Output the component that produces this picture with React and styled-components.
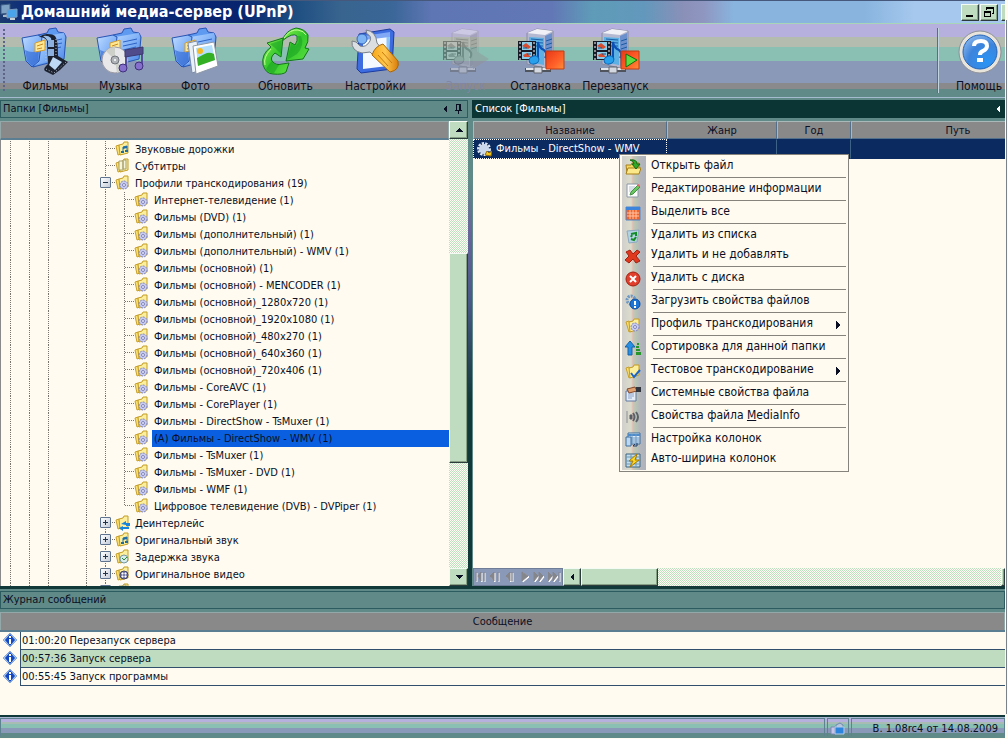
import React from "react";
import styled, { createGlobalStyle, css } from "styled-components";

const Global = createGlobalStyle`
  *, *::before, *::after { box-sizing: border-box; }
  body {
    margin: 0;
    background: #fffbf0;
    color: #0a0f24;
    font-family: Tahoma, "DejaVu Sans Condensed", "Noto Sans", sans-serif;
    font-size: 11px;
    line-height: 16px;
  }
  button {
    font: inherit;
    color: inherit;
    border: 0;
    padding: 0;
    margin: 0;
    background: none;
  }
  ul { list-style: none; margin: 0; padding: 0; }
  h1, h2 { margin: 0; font-weight: normal; font-size: inherit; }
  svg { display: block; flex: none; }
`;

const TEAL = "#5f8a87";
const GREEN = "#c0dcc0";
const CREAM = "#fffbf0";
const INK = "#0b3434";

const raised = css`
  background: ${GREEN};
  border: 1px solid;
  border-color: #f4fbf4 #2c3c3c #2c3c3c #f4fbf4;
  box-shadow: inset -1px -1px 0 #86a086;
`;

const dither = css`
  background:
    linear-gradient(${GREEN}, ${GREEN}) 0 0 / 0 0,
    repeating-conic-gradient(#bfe0bf 0 25%, #fffdf6 0 50%) 0 0 / 2px 2px;
`;

/* ---------- window frame ---------- */

const Window = styled.div`
  display: flex;
  flex-direction: column;
  height: 100vh;
  padding: 0 3px 1px 0;
  background: linear-gradient(#7a8288, #7a8288) right 1px top 20px / 1px calc(100% - 45px) no-repeat ${CREAM};
`;

const Frame = styled.div`
  display: flex;
  flex-direction: column;
  flex: 1;
  min-height: 0;
  overflow: hidden;
  background: ${TEAL};
`;

const TitleBar = styled.header`
  display: flex;
  align-items: center;
  flex: none;
  height: 23px;
  overflow: hidden;
  border-top: 1px solid #46587c;
  background: linear-gradient(90deg,
    #1c3b70 0, #0a2a7e 3%, #08246e 24%, #1c4c80 29%, #38648f 34%, #3a6698 39%,
    #5f76b4 43%, #6278b6 55%, #5f9cb8 59%, #6298bc 64%, #8a90b8 68%, #8f96c0 70%,
    #88b4de 73%, #88b4de 86%, #a6c8ee 91%, #a6c8ee 100%);
`;

const Title = styled.h1`
  flex: 1;
  padding-left: 3px;
  color: #fff;
  font-size: 16px;
  line-height: 22px;
  font-weight: bold;
  white-space: nowrap;
`;

const WindowButtons = styled.div`
  display: flex;
  gap: 1px;
  margin-right: -14px;
`;

const WindowButton = styled.button`
  ${raised}
  display: grid;
  place-items: center;
  width: 18px;
  height: 17px;
  margin-left: ${(p) => (p.$apart ? 2 : 0)}px;
`;

/* ---------- toolbar ---------- */

const Toolbar = styled.nav`
  display: flex;
  flex: none;
  height: 77px;
  overflow: hidden;
  border-top: 1px solid #a8d4b8;
  border-bottom: 2px solid ${TEAL};
  background: linear-gradient(#b5b0de 0 13px, #b4bcb0 13px 23px, #8abfb4 23px 37px,
    #8b99b8 37px 59px, #8a8a8c 59px 65px, ${TEAL} 65px 73px, #a5bcd0 73px);
`;

const Grip = styled.div`
  width: 2px;
  margin: 5px 3px 5px 3px;
  background: repeating-linear-gradient(#5d6488 0 2px, transparent 2px 4px);
`;

const ToolGroup = styled.div`
  display: flex;
  margin-right: 15px;
`;

const ToolButton = styled.button`
  display: flex;
  flex-direction: column;
  align-items: center;
  width: ${(p) => (p.$narrow ? 52 : 75)}px;
  padding-top: 3px;
  font-size: 12px;
  line-height: 18px;
  white-space: nowrap;
  &:disabled { color: #8186a4; }
  &:disabled svg { opacity: 0.4; filter: grayscale(1); }
`;

const ToolDivider = styled.div`
  width: 2px;
  margin: 4px 14px 5px auto;
  border-left: 1px solid #5c6a90;
  border-right: 1px solid #c2d4de;
`;

/* ---------- docked panels ---------- */

const Split = styled.main`
  display: flex;
  flex: 1;
  min-height: 0;
  border-bottom: 3px solid #12393a;
`;

const Panel = styled.section`
  display: flex;
  flex-direction: column;
  position: relative;
  min-width: 0;
  flex: ${(p) => p.$flex};
`;

const PanelHeader = styled.div`
  display: flex;
  align-items: center;
  gap: 8px;
  flex: none;
  height: 18px;
  padding: 0 4px 0 2px;
  border: 1px solid ${(p) => (p.$active ? INK : "#2c5c60")};
  background: ${(p) => (p.$active ? INK : TEAL)};
  color: ${(p) => (p.$active ? "#fff" : "inherit")};
`;

const PanelTitle = styled.h2`
  flex: 1;
`;

const TinyButton = styled.button`
  display: grid;
  place-items: center;
  color: inherit;
`;

const Splitter = styled.div`
  width: 4px;
  background: linear-gradient(${TEAL} 80px, #68669a 130px, #4a5a88 200px, #12393a 300px);
`;

const HeaderBand = styled.div`
  flex: none;
  height: 19px;
  border: 1px solid #93a8a8;
  border-bottom: 2px solid #5c7e92;
  background: #8a898a;
`;

const Columns = styled.div`
  display: flex;
  flex: 1;
  min-height: 0;
  padding: 3px 0 0 ${(p) => (p.$inset ? 1 : 0)}px;
`;

const Column = styled.div`
  display: flex;
  flex-direction: column;
  flex: 1;
  min-width: 0;
`;

const TreeBody = styled.ul`
  flex: 1;
  overflow: hidden;
  background: ${CREAM};
  border-left: 1px solid #8a8a8a;
  padding-top: 1px;
`;

const VScroll = styled.div`
  display: flex;
  flex-direction: column;
  width: 19px;
  ${dither}
`;

const HScroll = styled.div`
  display: flex;
  flex: 1;
  overflow: hidden;
  ${dither}
`;

const ScrollButton = styled.button`
  ${raised}
  display: grid;
  place-items: center;
  flex: none;
  width: ${(p) => p.$w || 18}px;
  height: 18px;
`;

const VThumb = styled.div`
  ${raised}
  flex: 0 0 45%;
`;

const HThumb = styled.div`
  ${raised}
  flex: 0 0 77px;
`;

const Spring = styled.div`
  flex: ${(p) => p.$grow || 1};
`;

/* ---------- tree ---------- */

const TreeRow = styled.li`
  display: flex;
  height: 17px;
`;

const dotsV = "repeating-linear-gradient(#77756e 0 1px, transparent 1px 2px)";
const dotsH = "repeating-linear-gradient(90deg, #77756e 0 1px, transparent 1px 2px)";

const Guide = styled.div`
  display: grid;
  place-items: center;
  flex: none;
  width: 19px;
  background-repeat: no-repeat;
  background-image: ${(p) =>
    p.$kind === "none" ? "none" : p.$kind === "line" ? dotsV : `${dotsV}, ${dotsH}`};
  background-position: 9px 0, 10px 7px;
  background-size: 1px ${(p) => (p.$kind === "last" ? "8px" : "100%")}, 9px 1px;
`;

const Expander = styled.button`
  display: grid;
  place-items: center;
  width: 11px;
  height: 11px;
  margin-bottom: 2px;
  border: 1px solid #5d7390;
  border-radius: 1px;
  background: linear-gradient(135deg, #fff, #c4ccd8);
`;

const NodeLabel = styled.span`
  flex: 1;
  margin-left: 3px;
  padding-left: 2px;
  line-height: 17px;
  white-space: nowrap;
  background: ${(p) => (p.$selected ? "#0a5fe0" : "transparent")};
`;

/* ---------- file list ---------- */

const TableArea = styled.div`
  flex: 1;
  min-height: 0;
  overflow: hidden;
  background: ${CREAM};
`;

const FileTable = styled.table`
  width: 592px;
  table-layout: fixed;
  border-collapse: separate;
  border-spacing: 0;
`;

const FileHead = styled.th`
  width: ${(p) => p.$w}px;
  height: 18px;
  padding: 1px 0 0;
  line-height: 15px;
  font-weight: normal;
  text-align: center;
  background: #8a898a;
  border: 1px solid;
  border-color: #a9b9b9 #52708c #52708c #a9b9b9;
`;

const FileCell = styled.td`
  height: 20px;
  padding: 0 0 0 3px;
  line-height: 18px;
  color: #fff;
  white-space: nowrap;
  background: #0a2a60;
  border: 1px ${(p) => (p.$focus ? "dotted #fff" : "solid #0a2a60")};
  border-right: 1px ${(p) => (p.$focus ? "dotted #fff" : "solid #3c6288")};
`;

const FileName = styled.span`
  display: flex;
  align-items: center;
  gap: 4px;
`;

const ListFooter = styled.div`
  display: flex;
  flex: none;
  height: 18px;
`;

const Navigator = styled.div`
  display: flex;
  align-items: center;
  justify-content: space-around;
  width: 90px;
  border: 1px solid #6f7d98;
  background: #8b99b8;
`;

const NavButton = styled.button`
  &:disabled { color: #85858c; }
`;

/* ---------- context menu ---------- */

const Menu = styled.div`
  position: absolute;
  left: 147px;
  top: 54px;
  width: 230px;
  padding: 0 2px 3px 2px;
  border: 1px solid #85837c;
  background: linear-gradient(90deg, #d0cfcc, #dcdccb 9px, #dcbcb4 11px, #b8c8b4 13px, #b4b6bc 18px, #aeb2ba) 2px 1px / 24px calc(100% - 2px) no-repeat ${CREAM};
`;

const MenuItem = styled.button`
  display: flex;
  align-items: center;
  width: 100%;
  height: 20px;
  font-size: 12px;
  line-height: 20px;
  text-align: left;
  white-space: nowrap;
`;

const MenuIcon = styled.span`
  flex: none;
  width: 29px;
  padding: 4px 0 0 3px;
`;

const MenuText = styled.span`
  flex: 1;
`;

const Submenu = styled.span`
  padding: 3px 6px 0 0;
`;

const MenuLine = styled.div`
  height: 3px;
  margin-left: 31px;
  border-bottom: 1px solid #85837c;
`;

/* ---------- log and status ---------- */

const LogPanel = styled.section`
  display: flex;
  flex-direction: column;
  flex: none;
  min-height: 128px;
  padding-top: 2px;
`;

const LogTable = styled.table`
  width: 100%;
  border-collapse: collapse;
  background: ${CREAM};
`;

const LogHead = styled.th`
  height: 18px;
  padding: 0;
  line-height: 15px;
  font-weight: normal;
  text-align: center;
  background: #8a898a;
  border: 1px solid #93a8a8;
  border-bottom: 2px solid #5c7e92;
`;

const LogIconCell = styled.td`
  width: 20px;
  height: 18px;
  padding: 0 0 0 1px;
`;

const LogCell = styled.td`
  height: 18px;
  padding: 1px 1px 0;
  background: ${(p) => (p.$alt ? GREEN : CREAM)};
  border-left: 1px solid #32506e;
  border-bottom: 1px solid #32506e;
`;

const LogArea = styled.div`
  flex: 1;
  margin-top: 3px;
  background: ${CREAM};
  border-bottom: 2px solid #12393a;
`;

const StatusBar = styled.footer`
  display: flex;
  gap: 2px;
  flex: none;
  height: 21px;
  padding: 1px 0 2px;
  background: linear-gradient(#a9b8d0 0 1px, #b5b0de 1px 5px, #a9bcb4 5px 7px, #8abfb4 7px 11px,
    #8b99b8 11px 16px, ${TEAL} 16px);
`;

const StatusCell = styled.div`
  display: flex;
  align-items: center;
  justify-content: flex-end;
  flex: ${(p) => p.$flex};
  padding-right: ${(p) => (p.$text ? 6 : 2)}px;
  padding-top: 2px;
  border: 1px solid #5f8290;
  border-bottom: 0;
`;

/* ---------- drawings ---------- */

const FolderBase = () => (
  <>
    <path d="M16 7l9-2 2-4 7-1 2 4 6 1 2 4-2 22-31 8z" fill="#5e9af0" stroke="#2854b4" strokeLinejoin="round" />
    <path d="M18 9l24-4 1 4-2 21-28 7z" fill="url(#folder)" />
    <path d="M26 14l14-3M26 18l14-3M26 22l13-3" stroke="#2c62c4" />
    <path d="M0 10l16-3 4 2-3 24-7 6-6-6z" fill="url(#folder)" stroke="#2854b4" strokeLinejoin="round" />
    <path d="M3 22q8 4 14 0l-1 11-6 5-5-5z" fill="#2c64d0" opacity="0.6" />
    <path d="M13 15l10-3v10l-10 2z" fill="#ffe894" stroke="#d49c2c" />
    <path d="M15 18l6-2M15 21l5-1" stroke="#c88820" />
  </>
);

const Defs = () => (
  <defs>
    <linearGradient id="folder" x1="0" y1="0" x2="1" y2="1">
      <stop offset="0" stopColor="#c0dcff" />
      <stop offset="0.5" stopColor="#84b4f8" />
      <stop offset="1" stopColor="#4a84e4" />
    </linearGradient>
    <linearGradient id="leaf" x1="0" y1="0" x2="1" y2="1">
      <stop offset="0" stopColor="#8cf050" />
      <stop offset="0.5" stopColor="#34c82c" />
      <stop offset="1" stopColor="#5ce040" />
    </linearGradient>
    <linearGradient id="handle" x1="0" y1="0" x2="1" y2="0">
      <stop offset="0" stopColor="#f6a818" />
      <stop offset="0.5" stopColor="#ffc850" />
      <stop offset="1" stopColor="#d87c08" />
    </linearGradient>
    <linearGradient id="stop" x1="0" y1="0" x2="1" y2="1">
      <stop offset="0" stopColor="#e83818" />
      <stop offset="0.6" stopColor="#ff6028" />
      <stop offset="1" stopColor="#ff9038" />
    </linearGradient>
    <radialGradient id="help" cx="0.7" cy="0.8" r="0.9">
      <stop offset="0" stopColor="#2a94f4" />
      <stop offset="0.6" stopColor="#3c84dc" />
      <stop offset="1" stopColor="#8cb8ec" />
    </radialGradient>
  </defs>
);

const toolIcon = (children) => (
  <svg width="50" height="50" viewBox="-1 -1 50 50" fill="none" aria-hidden="true">
    <Defs />
    {children}
  </svg>
);

const FilmIcon = () => toolIcon(
  <>
    <FolderBase />
    <path d="M17 9q4-3 8-3 6 0 8 2 3 3 3 20l10 6-8 8-7 5-8-4q-2-2 1-5l2-2-1-23q-2-4-8-4z" fill="#1c2230" />
    <path d="M21 8q5-1 8 2l1 7-3 1q0-6-6-10z" fill="#9cc0ec" />
    <path d="M26 12h6v7h-6zM26 21h6v7h-6z" fill="#8cb0e0" />
    <path d="M27 37l4-8 9 5-7 8z" fill="#bcd8f4" />
    <path d="M24 14v20M34 11v17" stroke="#b8c4d4" strokeDasharray="1 2" />
    <path d="M24 41l8 4 12-11" stroke="#b8c4d4" strokeDasharray="1 2" />
  </>
);

const MusicIcon = () => toolIcon(
  <>
    <FolderBase />
    <circle cx="18" cy="32" r="13" fill="#e8e8ea" stroke="#9a9aa4" />
    <path d="M18 32l-9-9a13 13 0 0 1 9-4zM18 32l9 8a13 13 0 0 1-7 5z" fill="#ccd0c8" />
    <circle cx="18" cy="32" r="4" fill="#b0b4b8" stroke="#70747c" />
    <circle cx="18" cy="32" r="1" fill="#fff" />
    <path d="M29 39V24M45 36V20" stroke="#5450a0" strokeWidth="2" />
    <path d="M28 22l18-3v7l-18 3z" fill="#504c8c" stroke="#3c3870" />
    <ellipse cx="26" cy="40" rx="4" ry="4" fill="#8470cc" stroke="#40307c" />
    <ellipse cx="42" cy="38" rx="4" ry="4" fill="#8470cc" stroke="#40307c" />
  </>
);

const PhotoIcon = () => toolIcon(
  <>
    <FolderBase />
    <path d="M16 15l9-2 4 29-9 3z" fill="#e8f0f8" stroke="#7c8ca8" />
    <path d="M21 18l21-4 4 24-22 8z" fill="#fff" stroke="#8c98a8" />
    <path d="M24 20l16-3 3 15-17 5z" fill="#b4e0fc" />
    <path d="M25 30q7-4 10-5t7 1l1 6-17 6z" fill="#34b024" />
    <circle cx="28" cy="23" r="3" fill="#f8b820" />
  </>
);

const RefreshIcon = () => toolIcon(
  <>
    <path d="M20 13Q24 2 34 0q9 1 12 7 1 7-3 13l4 1-6 10-17 2 4-19 5 3q3-4 2-9-4-4-15 5z" fill="url(#leaf)" stroke="#14781c" strokeLinejoin="round" />
    <path d="M35 8q4 6-2 10l-4-3-4 17 10-6q8-9 4-18z" fill="#1ca424" opacity="0.6" />
    <path d="M22 10q6-9 14-8 6 1 8 5" stroke="#c4ff98" />
    <path d="M21 10L5 15l4 4q-10 7-8 18 3 9 10 9 10 1 13-2l3-9-7 1q-6 2-10-3-2-4 3-8l6 4z" fill="url(#leaf)" stroke="#14781c" strokeLinejoin="round" />
    <path d="M20 12L8 16l5 4 6 6zM10 33q-4 4-6 8 4 5 8 4l5-8q-5 0-7-4z" fill="#1ca424" opacity="0.6" />
    <path d="M9 21Q1 29 3 37" stroke="#c4ff98" />
  </>
);

const SettingsIcon = () => toolIcon(
  <>
    <path d="M7 6l31-5 4 3-2 37-31 4-4-4z" fill="#3c6ce0" stroke="#1c3ca0" />
    <path d="M11 9l27-4-2 33-25 3z" fill="#f4f8ff" />
    <path d="M12 8l26-4v5l-26 3z" fill="#80a8f4" />
    <path d="M36 9v26" stroke="#8cc4f8" strokeWidth="3" />
    <path d="M0 13q-1 10 10 12l8-1 5 5 7-8-5-6Q24 3 14 2l1 4q5 2 3 7-4 7-10 5l-4-4z" fill="#dcdfe2" stroke="#788088" />
    <circle cx="10" cy="11" r="5" fill="#7cb4f4" stroke="#3868b8" />
    <path d="M20 27q3-9 11-11l15 17q2 9-8 11z" fill="url(#handle)" stroke="#a86808" />
    <path d="M26 27l10 11M30 24l10 11" stroke="#c87c10" />
  </>
);

const ServerBase = () => (
  <>
    <path d="M10 5l10-4 16 2v33l-8 4-18-4z" fill="#b4b8d0" stroke="#888ca0" />
    <path d="M10 5l10-4 16 2-8 4z" fill="#f0f0f6" />
    <path d="M12 9l15 1v27l-15-3z" fill="#5cb0e4" />
    <path d="M28 8l7-3v30l-7 4z" fill="#6c90cc" />
    <path d="M14 11l12 1M14 14l12 1M14 18h12M29 13l6-2M29 17l6-2M29 21l6-2" stroke="#1c5ca4" />
    <path d="M1 13h18v19H1z" fill="#181c28" />
    <path d="M5 14h10v8H5zM5 24h10v7H5z" fill="#8ccce8" />
    <path d="M5 18l4-3 5 4-3 2zM6 27l4-2 4 4H7z" fill="#d84c30" />
    <path d="M6 20h4M10 26h4" stroke="#184c80" />
    <path d="M3 14v18M17 14v18" stroke="#fff" strokeDasharray="2 2" />
    <path d="M21 32V14q1 6 6 8 4 4 1 8" stroke="#0c50b4" strokeWidth="2" />
    <ellipse cx="17" cy="32" rx="5" ry="4" fill="#28a0ec" stroke="#0c64b4" transform="rotate(-20 17 32)" />
    <path d="M8 42h26" stroke="#50545c" strokeWidth="4" />
    <path d="M9 41h24" stroke="#e4e8ec" strokeWidth="2" />
    <path d="M17 39h8v6h-8z" fill="#d4d8e0" stroke="#60646c" />
  </>
);

const StartIcon = () => toolIcon(
  <>
    <ServerBase />
    <path d="M31 21l16 10-16 10z" fill="#8c8eb0" />
  </>
);

const StopIcon = () => toolIcon(
  <>
    <ServerBase />
    <path d="M29 23h18v18H29z" fill="url(#stop)" stroke="#c03c14" />
  </>
);

const RestartIcon = () => toolIcon(
  <>
    <ServerBase />
    <path d="M29 23h18v18H29z" fill="url(#stop)" stroke="#c03c14" />
    <path d="M34 26l11 6-11 7z" fill="#60dc40" stroke="#146c10" />
  </>
);

const HelpIcon = () => toolIcon(
  <>
    <circle cx="25" cy="24" r="21" fill="#e8e4dc" stroke="#8c9098" />
    <circle cx="25" cy="24" r="17" fill="url(#help)" stroke="#2464b8" />
    <path d="M19 18q0-5 7-5 6 0 6 5 0 3-4 5-3 1-3 4" stroke="#fff" strokeWidth="4" />
    <path d="M22 30h6v4h-6z" fill="#fff" />
  </>
);

const AppIcon = ({ size = 18 }) => (
  <svg width={size} height={size} viewBox="0 0 18 18" aria-hidden="true">
    <path d="M1 2l9-1v9l-9 1z" fill="#7ea2c4" stroke="#3c5c84" />
    <path d="M3 12l6-1v3H3z" fill="#a8b8c4" />
    <path d="M7 7l10-1v8l-10 1z" fill="#4aa4ec" stroke="#7c9cbc" />
    <path d="M10 15h5v2h-5z" fill="#c4d0d8" />
  </svg>
);

const StatusIcon = () => (
  <svg width="16" height="14" viewBox="0 0 16 14" aria-hidden="true">
    <path d="M1 5h4v7H1z" fill="#c8c4e8" stroke="#7c88b4" />
    <path d="M6 3l4-2 3 2v3H6z" fill="#b8c4dc" stroke="#6c8cac" />
    <path d="M5 5h9v7H5z" fill="#2c84dc" stroke="#b4cce8" />
  </svg>
);

const gear = (cx, cy, color, stroke) => (
  <>
    <circle cx={cx} cy={cy} r="4" fill={color} />
    <circle cx={cx} cy={cy} r="4" fill="none" stroke={stroke} strokeDasharray="2 1" />
    <circle cx={cx} cy={cy} r="1.5" fill="#eef" stroke={stroke} />
  </>
);

const overlays = {
  gear: gear(9, 10, "#c8ccf0", "#8084b8"),
  music: <><path d="M8 11V6l4-1v5" fill="none" stroke="#1c6ca8" strokeWidth="1" /><path d="M8 6l4-1v2l-4 1zM6 10h3v2H6zM10 9h3v2h-3z" fill="#1c6ca8" /></>,
  text: <path d="M4 3h4v9H4zM8 2h3v9H8z" fill="#f4f4dc" stroke="#a8a068" />,
  swap: <path d="M6 9l5-3v2h4v3h-4v-1zM14 12H8v-1l-4 2 4 3v-2h6z" fill="#1484dc" />,
  clock: <><circle cx="9" cy="10" r="4" fill="#d8ecec" stroke="#7898a0" /><path d="M7 9l2 2 3-3" fill="none" stroke="#288838" /></>,
  reel: <><circle cx="9" cy="9" r="4" fill="#7c80ac" stroke="#40446c" /><path d="M7 7h1v1H7zM10 7h1v1h-1zM7 10h1v1H7zM10 10h1v1h-1z" fill="#fff" stroke="#fff" /></>,
};

const FolderIcon = ({ kind }) => (
  <svg width="15" height="16" viewBox="0 0 15 16" aria-hidden="true">
    <path d="M1 5l3-1 2 9-3 1z" fill="#f8e070" stroke="#c8a02c" />
    <path d="M4 4l4-1 1-2h4v11l-8 2z" fill="#fbee9c" stroke="#c49c24" />
    {overlays[kind]}
  </svg>
);

const FileGear = () => (
  <svg width="15" height="15" viewBox="0 0 15 15" aria-hidden="true">
    <circle cx="7" cy="7" r="5" fill="none" stroke="#dce4f0" strokeWidth="4" strokeDasharray="2 1" />
    <circle cx="7" cy="7" r="5" fill="#ccd8ec" />
    <path d="M8 13l2-4 2 2 3-2-1 5z" fill="#f4c81c" stroke="#986c08" />
  </svg>
);

const InfoIcon = () => (
  <svg width="16" height="16" viewBox="0 0 16 16" aria-hidden="true">
    <path d="M8 1l7 7-7 7-7-7z" fill="#a8c4ec" stroke="#8cacd8" strokeLinejoin="round" />
    <path d="M8 2l5 6-5 6-5-6z" fill="#1448c0" />
    <path d="M8 4v2M8 7v5" stroke="#fff" strokeWidth="2" />
  </svg>
);

const Arrow = ({ dir, size = 4 }) => {
  const paths = {
    left: `M${size} 0v${size * 2}L0 ${size}z`,
    right: `M0 0v${size * 2}L${size} ${size}z`,
    up: `M0 ${size}h${size * 2}L${size} 0z`,
    down: `M0 0h${size * 2}L${size} ${size}z`,
  };
  const wide = dir === "up" || dir === "down";
  return (
    <svg width={wide ? size * 2 : size} height={wide ? size : size * 2} shapeRendering="crispEdges" aria-hidden="true">
      <path d={paths[dir]} fill="currentColor" />
    </svg>
  );
};

const Pin = () => (
  <svg width="8" height="10" viewBox="0 0 8 10" shapeRendering="crispEdges" aria-hidden="true">
    <path d="M1 0h5v1H1zM1 0h1v6H1zM4 0h2v6H4zM0 6h7v1H0zM3 7h1v3H3z" fill="currentColor" />
  </svg>
);

const navShapes = [
  "M1 1v9M6 1L3 5l3 5zM9 1v9",
  "M5 1L1 5l4 5zM9 1v9",
  "M6 1L2 5l4 5zM8 1v9",
  "M3 1l6 4-6 5z",
  "M1 1l4 4-4 5zM6 1l4 4-4 5z",
  "M0 1l4 4-4 5zM5 1l4 4-4 5zM11 1v9",
];

const NavGlyph = ({ d }) => (
  <svg width="13" height="12" viewBox="0 0 13 12" aria-hidden="true">
    <path d={d} fill="#fff" stroke="#fff" transform="translate(1 1)" />
    <path d={d} fill="#85858c" stroke="#85858c" />
  </svg>
);

const menuFolder = (
  <>
    <path d="M1 5l3-1 3 10-3 1z" fill="#f8e070" stroke="#c8a02c" />
    <path d="M4 5l4-1 1-2h5v10l-9 3z" fill="#fbee9c" stroke="#c49c24" />
  </>
);

const menuDrawings = {
  open: <><path d="M1 6h5l1-2h7v10H2z" fill="#f4d860" stroke="#a88018" /><path d="M3 9h13l-2 6H1z" fill="#fbe888" stroke="#a88018" /><path d="M5 1q7-1 7 4h3l-4 5-4-5h2q0-3-4-4z" fill="#34a828" stroke="#146814" /></>,
  edit: <><path d="M2 2h11v13H2z" fill="#fcfcfc" stroke="#8c98a8" /><path d="M4 5h6M4 7h5M4 9h4" stroke="#b4c0d0" /><path d="M5 13l1-3 7-7 2 2-7 7z" fill="#68c860" stroke="#489048" /><path d="M12 3l2-1 1 2-1 1z" fill="#e06868" /></>,
  select: <><path d="M1 2h14v13H1z" fill="#f0642c" stroke="#5088c8" /><path d="M1 2h14v3H1z" fill="#3c84dc" /><path d="M2 8h12M2 11h12M5 5v9M8 5v9M11 5v9" stroke="#ffc4a4" /></>,
  bin: <><path d="M2 3l12-1-2 12-8 1z" fill="#b4d4e4" stroke="#8ca8c0" /><path d="M6 6l5-1v3M11 9l-2 3-3-1M6 9l1-2" stroke="#148c28" strokeWidth="2" fill="none" /></>,
  cross: <path d="M1 4l4-2 3 4 4-4 3 2-4 4 4 5-4 2-3-4-4 4-4-3 4-4z" fill="#e0381c" stroke="#a42010" />,
  disk: <><circle cx="8" cy="8" r="7" fill="#e0402c" stroke="#a42010" /><path d="M5 5l6 6M11 5l-6 6" stroke="#fff" strokeWidth="2" /></>,
  load: <><circle cx="6" cy="6" r="4" fill="none" stroke="#6c98c4" strokeWidth="3" strokeDasharray="2 1" /><circle cx="10" cy="10" r="5" fill="#1c74d4" stroke="#0c4ca0" /><path d="M10 7v4M10 12v2" stroke="#fff" strokeWidth="2" /></>,
  profile: <>{menuFolder}{gear(10, 10, "#c8ccf0", "#8084b8")}</>,
  sort: <><path d="M5 1l5 6H7v8H3V7H0z" fill="#2890e4" stroke="#1460a8" /><path d="M12 3h2v2h-2zM11 6h3v2h-3zM11 9h4v2h-4zM11 12h5v3h-5z" fill="#28942c" /></>,
  test: <>{menuFolder}<path d="M6 10l3 4 6-7" fill="none" stroke="#1c64c8" strokeWidth="2" /></>,
  system: <><path d="M1 5h10v10H1z" fill="#e4ecf8" stroke="#6078a0" /><path d="M3 8h6M3 10h6M3 12h4" stroke="#8ca4c8" /><path d="M2 3l8-2 2 4-8 2z" fill="#e0a070" stroke="#80482c" /><path d="M11 1h5v5h-5z" fill="#30343c" /></>,
  media: <><path d="M2 2v12" stroke="#8c9098" /><path d="M5 6h2v4H5z" fill="#585c64" stroke="#585c64" /><path d="M8 4q3 4 0 8M11 3q4 5 0 10" fill="none" stroke="#5c6068" strokeWidth="2" /></>,
  columns: <><path d="M3 1h12v11H3z" fill="#dcecfc" stroke="#3c6c9c" /><path d="M3 2h12v2H3z" fill="#4c8ccc" /><path d="M3 6h12M3 8h12M3 10h12M7 2v10M11 2v10" stroke="#6c98c0" /><path d="M1 5h5v9H1z" fill="#bcd8f0" stroke="#3c6c9c" /><path d="M8 14h4v-3M8 14l2-2" stroke="#1c3c6c" fill="none" /></>,
  auto: <><path d="M1 2h14v13H1z" fill="#c4dcec" stroke="#3c6480" /><path d="M1 5h14M1 9h14M1 12h14M6 2v13M11 2v13" stroke="#7098b0" /><path d="M12 2L4 9h4l-3 6 9-7h-4z" fill="#fcd820" stroke="#a87c08" /></>,
};

/* ---------- content ---------- */

const toolGroups = [
  [["Фильмы", FilmIcon], ["Музыка", MusicIcon], ["Фото", PhotoIcon]],
  [["Обновить", RefreshIcon]],
  [["Настройки", SettingsIcon]],
  [["Запуск", StartIcon, true], ["Остановка", StopIcon], ["Перезапуск", RestartIcon]],
];

const profiles = [
  "Интернет-телевидение (1)",
  "Фильмы (DVD) (1)",
  "Фильмы (дополнительный) (1)",
  "Фильмы (дополнительный) - WMV (1)",
  "Фильмы (основной) (1)",
  "Фильмы (основной) - MENCODER (1)",
  "Фильмы (основной)_1280x720 (1)",
  "Фильмы (основной)_1920x1080 (1)",
  "Фильмы (основной)_480x270 (1)",
  "Фильмы (основной)_640x360 (1)",
  "Фильмы (основной)_720x406 (1)",
  "Фильмы - CoreAVC (1)",
  "Фильмы - CorePlayer (1)",
  "Фильмы - DirectShow - TsMuxer (1)",
  "(A) Фильмы - DirectShow - WMV (1)",
  "Фильмы - TsMuxer (1)",
  "Фильмы - TsMuxer - DVD (1)",
  "Фильмы - WMF (1)",
  "Цифровое телевидение (DVB) - DVPiper (1)",
];

const nodes = [
  { text: "Звуковые дорожки", icon: "music" },
  { text: "Субтитры", icon: "text" },
  { text: "Профили транскодирования (19)", icon: "gear", toggle: "minus" },
  ...profiles.map((text, i) => ({
    text,
    icon: "gear",
    child: true,
    last: i === profiles.length - 1,
    selected: text.startsWith("(A)"),
  })),
  { text: "Деинтерлейс", icon: "swap", toggle: "plus" },
  { text: "Оригинальный звук", icon: "music", toggle: "plus" },
  { text: "Задержка звука", icon: "clock", toggle: "plus" },
  { text: "Оригинальное видео", icon: "reel", toggle: "plus" },
  { text: "", icon: "text", toggle: "plus" },
];

const menuItems = [
  ["open", "Открыть файл", true],
  ["edit", "Редактирование информации", true],
  ["select", "Выделить все", true],
  ["bin", "Удалить из списка", false],
  ["cross", "Удалить и не добавлять", true],
  ["disk", "Удалить с диска", true],
  ["load", "Загрузить свойства файлов", true],
  ["profile", "Профиль транскодирования", true, true],
  ["sort", "Сортировка для данной папки", true],
  ["test", "Тестовое транскодирование", true, true],
  ["system", "Системные свойства файла", true],
  ["media", <>Свойства файла <u>M</u>ediaInfo</>, true],
  ["columns", "Настройка колонок", false],
  ["auto", "Авто-ширина колонок", false],
];

const columns = [["Название", 194], ["Жанр", 110], ["Год", 74], ["Путь", 214]];

const log = [
  "01:00:20 Перезапуск сервера",
  "00:57:36 Запуск сервера",
  "00:55:45 Запуск программы",
];

const Node = ({ node }) => (
  <TreeRow>
    <Guide $kind="line" />
    <Guide $kind="line" />
    <Guide $kind="line" />
    <Guide $kind="none" />
    <Guide $kind="line" />
    <Guide $kind={node.child ? "line" : "branch"}>
      {node.toggle && (
        <Expander aria-label={node.toggle === "plus" ? "Развернуть" : "Свернуть"}>
          <svg width="7" height="7" shapeRendering="crispEdges" aria-hidden="true">
            <path d={node.toggle === "plus" ? "M1 3h5v1H1zM3 1h1v5H3z" : "M1 3h5v1H1z"} fill="#20344c" />
          </svg>
        </Expander>
      )}
    </Guide>
    {node.child && <Guide $kind={node.last ? "last" : "branch"} />}
    <FolderIcon kind={node.icon} />
    <NodeLabel $selected={node.selected}>{node.text}</NodeLabel>
  </TreeRow>
);

const ContextMenu = () => (
  <Menu role="menu">
    {menuItems.map(([icon, text, line, sub]) => (
      <React.Fragment key={icon}>
        <MenuItem role="menuitem">
          <MenuIcon>
            <svg width="16" height="16" viewBox="0 0 16 16" fill="none" aria-hidden="true">{menuDrawings[icon]}</svg>
          </MenuIcon>
          <MenuText>{text}</MenuText>
          {sub && <Submenu><Arrow dir="right" /></Submenu>}
        </MenuItem>
        {line && <MenuLine />}
      </React.Fragment>
    ))}
  </Menu>
);

export default function App() {
  return (
    <Window>
      <Global />
      <Frame>
        <TitleBar>
          <AppIcon />
          <Title>Домашний медиа-сервер (UPnP)</Title>
          <WindowButtons>
            <WindowButton aria-label="Свернуть">
              <svg width="12" height="11" shapeRendering="crispEdges" aria-hidden="true"><path d="M2 8h7v2H2z" /></svg>
            </WindowButton>
            <WindowButton aria-label="Восстановить">
              <svg width="12" height="11" shapeRendering="crispEdges" aria-hidden="true">
                <path d="M3 0h8v7H9V6h1V2H4v1H3zM1 4h7v6H1zM2 6v3h5V6z" fillRule="evenodd" />
              </svg>
            </WindowButton>
            <WindowButton $apart aria-label="Закрыть" />
          </WindowButtons>
        </TitleBar>

        <Toolbar>
          <Grip />
          {toolGroups.map((group, i) => (
            <ToolGroup key={i}>
              {group.map(([label, Icon, off]) => (
                <ToolButton key={label} disabled={off}>
                  <Icon />
                  {label}
                </ToolButton>
              ))}
            </ToolGroup>
          ))}
          <ToolDivider />
          <ToolButton $narrow>
            <HelpIcon />
            Помощь
          </ToolButton>
        </Toolbar>

        <Split>
          <Panel $flex="468 1 0">
            <PanelHeader>
              <PanelTitle>Папки [Фильмы]</PanelTitle>
              <TinyButton aria-label="Скрыть"><Arrow dir="left" /></TinyButton>
              <TinyButton aria-label="Закрепить"><Pin /></TinyButton>
            </PanelHeader>
            <Columns>
              <Column>
                <HeaderBand />
                <TreeBody>
                  {nodes.map((node, i) => <Node key={i} node={node} />)}
                </TreeBody>
              </Column>
              <VScroll>
                <ScrollButton $w={19} aria-label="Вверх"><Arrow dir="up" /></ScrollButton>
                <Spring $grow={114} />
                <VThumb />
                <Spring $grow={105} />
                <ScrollButton $w={19} aria-label="Вниз"><Arrow dir="down" /></ScrollButton>
              </VScroll>
            </Columns>
          </Panel>
          <Splitter />
          <Panel $flex="533 1 0">
            <PanelHeader $active>
              <PanelTitle>Список [Фильмы]</PanelTitle>
              <TinyButton aria-label="Скрыть"><Arrow dir="left" /></TinyButton>
            </PanelHeader>
            <Columns $inset>
              <Column>
                <TableArea>
                  <FileTable>
                    <thead>
                      <tr>{columns.map(([name, w]) => <FileHead key={name} $w={w}>{name}</FileHead>)}</tr>
                    </thead>
                    <tbody>
                      <tr>
                        <FileCell $focus>
                          <FileName><FileGear />Фильмы - DirectShow - WMV</FileName>
                        </FileCell>
                        <FileCell />
                        <FileCell />
                        <FileCell />
                      </tr>
                    </tbody>
                  </FileTable>
                </TableArea>
                <ListFooter>
                  <Navigator>
                    {navShapes.map((d) => (
                      <NavButton key={d} disabled aria-label="Переход"><NavGlyph d={d} /></NavButton>
                    ))}
                  </Navigator>
                  <HScroll>
                    <ScrollButton aria-label="Влево"><Arrow dir="left" /></ScrollButton>
                    <HThumb />
                    <Spring />
                    <ScrollButton $w={4} aria-label="Вправо" />
                  </HScroll>
                </ListFooter>
              </Column>
            </Columns>
            <ContextMenu />
          </Panel>
        </Split>

        <LogPanel>
          <PanelHeader>
            <PanelTitle>Журнал сообщений</PanelTitle>
          </PanelHeader>
          <LogArea>
            <LogTable>
              <thead>
                <tr><LogHead colSpan={2}>Сообщение</LogHead></tr>
              </thead>
              <tbody>
                {log.map((text, i) => (
                  <tr key={text}>
                    <LogIconCell><InfoIcon /></LogIconCell>
                    <LogCell $alt={i % 2 === 1}>{text}</LogCell>
                  </tr>
                ))}
              </tbody>
            </LogTable>
          </LogArea>
        </LogPanel>

        <StatusBar>
          <StatusCell $flex="1" />
          <StatusCell $flex="0 0 22px"><StatusIcon /></StatusCell>
          <StatusCell $flex="0 0 154px" $text>В. 1.08rc4 от 14.08.2009</StatusCell>
        </StatusBar>
      </Frame>
    </Window>
  );
}
